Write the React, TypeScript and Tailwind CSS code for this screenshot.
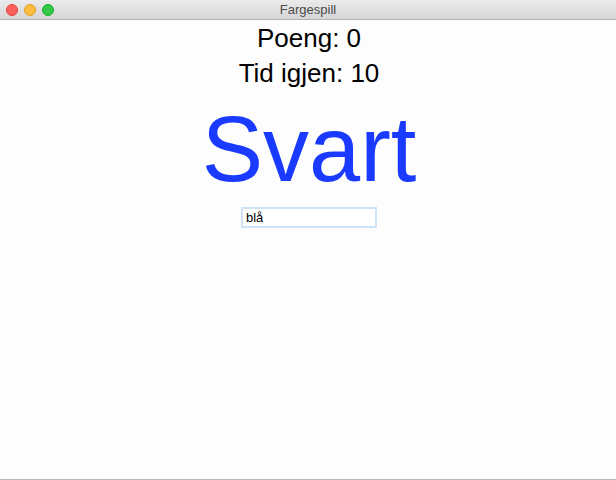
import { useState } from 'react'

export default function App() {
  const [answer, setAnswer] = useState('blå')

  return (
    <div className="w-[616px] h-[480px] flex flex-col bg-[#fdfdfd] border-b border-[#b8b8b8] font-['Liberation_Sans',Arial,sans-serif] overflow-hidden">
      <div className="h-[20px] shrink-0 flex items-center relative bg-gradient-to-b from-[#ebebeb] to-[#d5d5d5] border-b border-[#b4b4b4]">
        <div className="flex gap-[6px] pl-[6px]">
          <span className="w-[12px] h-[12px] rounded-full bg-[#fc605c] border border-[#e0443e]" />
          <span className="w-[12px] h-[12px] rounded-full bg-[#fdbc40] border border-[#dea123]" />
          <span className="w-[12px] h-[12px] rounded-full bg-[#34c84a] border border-[#1aab29]" />
        </div>
        <div className="absolute inset-0 flex items-center justify-center text-[13px] text-[#4a4a4a]">
          Fargespill
        </div>
      </div>

      <div className="flex flex-col items-center pl-[2px]">
        <div className="text-[26px] leading-[32px] text-black mt-[2px]">Poeng: 0</div>
        <div className="text-[26px] leading-[32px] text-black mt-[3px]">Tid igjen: 10</div>
        <div className="text-[92px] leading-[100px] text-[#1a3bff] mt-[10px]">Svart</div>
        <input
          value={answer}
          onChange={e => setAnswer(e.target.value)}
          className="mt-[8px] w-[136px] h-[21px] px-[3px] text-[13px] text-black bg-white border-2 border-[#cfe2f6] outline-none"
        />
      </div>
    </div>
  )
}
